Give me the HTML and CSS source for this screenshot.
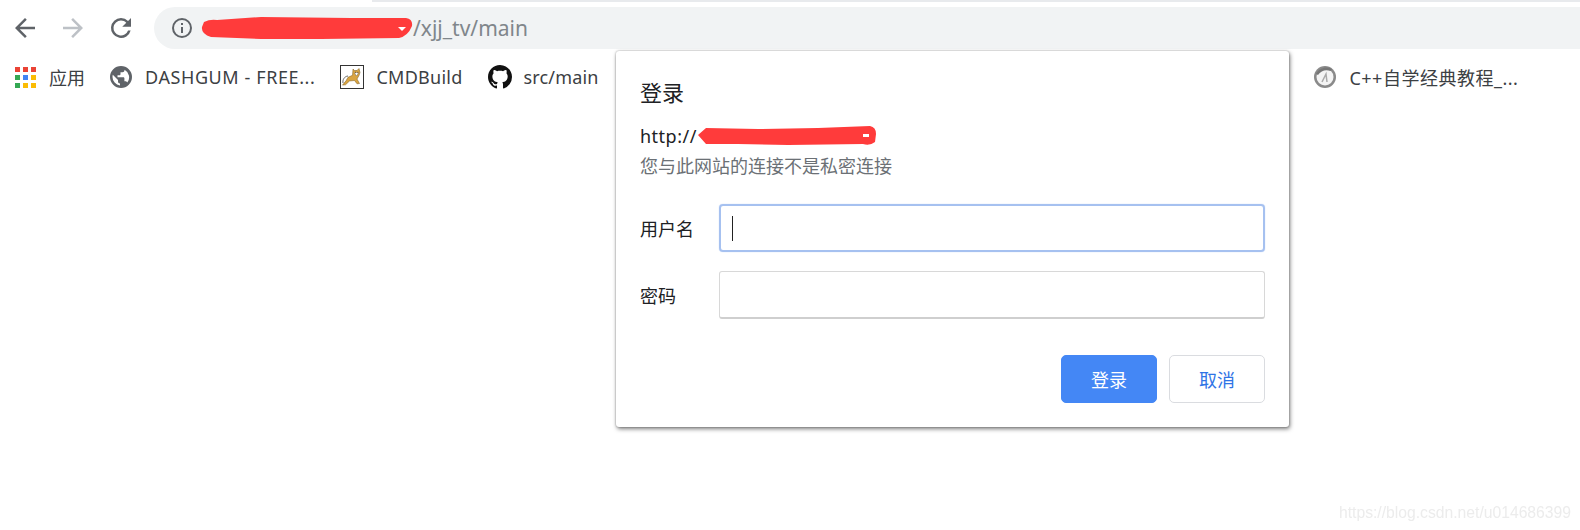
FILE: index.html
```html
<!DOCTYPE html>
<html>
<head>
<meta charset="UTF-8">
<title>xjj_tv</title>
<link rel="stylesheet" href="styles.css">
</head>
<body>
	<div class="tab-edge"></div>

	<div class="toolbar">
		<svg class="nav-icon" viewBox="0 0 24 24"><path fill="#5f6368" d="M20 11H7.830l5.590-5.590L12 4l-8 8 8 8 1.410-1.410L7.830 13H20z"/></svg>
		<svg class="nav-icon" viewBox="0 0 24 24"><path fill="#bdc1c6" d="M4 11h12.170l-5.590-5.590L12 4l8 8-8 8-1.410-1.410L16.170 13H4z"/></svg>
		<svg class="nav-icon" viewBox="0 0 24 24"><path fill="#5f6368" d="M17.650 6.350A7.960 7.960 0 0 0 12 4a8 8 0 1 0 7.730 10h-2.080A6 6 0 1 1 12 6c1.660 0 3.140.690 4.220 1.780L13 11h7V4z"/></svg>
		<div class="omnibox">
			<svg class="info-icon" viewBox="0 0 24 24"><path fill="#5f6368" d="M11 7h2v2h-2zm0 4h2v6h-2zm1-9a10 10 0 1 0 0 20 10 10 0 0 0 0-20zm0 18a8 8 0 1 1 0-16 8 8 0 0 1 0 16z"/></svg>
			<svg class="scribble-url" viewBox="0 0 212 24"><path fill="#ff3b3b" d="M3 6 Q9 3 16 4 L60 1 L150 2 L205 2 Q212 3 211 10 Q207 20 198 22 L120 23 L60 23 L10 21 Q0 18 1 11 Z"/><path fill="#fff" d="M197 11h8l-4 4z"/></svg>
			<span class="url">/xjj_tv/main</span>
		</div>
	</div>

	<div class="bookmarks">
		<div class="mark mark-apps">
			<div class="apps-grid">
				<i class="red"></i><i class="red"></i><i class="red"></i>
				<i class="green"></i><i class="blue"></i><i class="yellow"></i>
				<i class="green"></i><i class="yellow"></i><i class="yellow"></i>
			</div>
			<span>应用</span>
		</div>
		<div class="mark mark-dash">
			<svg class="mark-icon" viewBox="0 0 24 24"><path fill="#5f6368" d="M12 1a11 11 0 1 0 0 22 11 11 0 0 0 0-22zM3.500 12c0-.8.1-1.500.3-2.200L9 15v1.500c0 1 .8 2 2 2v1.900A8.500 8.500 0 0 1 3.500 12zm14.800 5.600c-.3-.8-1-1.400-1.900-1.400h-1v-3c0-.5-.5-1-1-1H8.500v-2h2c.5 0 1-.5 1-1v-2h2c1.100 0 2-.9 2-2v-.4a8.500 8.500 0 0 1 2.800 12.800z"/></svg>
			<span>DASHGUM - FREE...</span>
		</div>
		<div class="mark mark-cmd">
			<svg class="mark-icon tomcat" viewBox="0 0 24 24">
				<rect x=".5" y=".5" width="23" height="23" fill="#fff" stroke="#333"/>
				<path fill="#d9a441" stroke="#7a5a1e" stroke-width=".5" d="M13 4l1.500 1.500L17 5.500 19 3.500l1 4-1 3-2 3.500 2.500 4.500-2.500.3-2.500-3.300-5 .5-4 3.800-3 .3 3.500-4.300 2-3.500 4.500-2z"/>
				<path fill="none" stroke="#666" stroke-width="1" d="M8 11C4 11.500 2.500 15 3 18"/>
				<path fill="#fff" stroke="#555" stroke-width=".4" d="M14.500 8l2-.5 2 .5-2 3z"/>
				<path fill="none" stroke="#333" stroke-width=".8" d="M15 7.300h.8M17.500 7.300h.8"/>
			</svg>
			<span>CMDBuild</span>
		</div>
		<div class="mark mark-git">
			<svg class="mark-icon" viewBox="0 0 16 16"><path fill="#111" d="M8 0C3.580 0 0 3.580 0 8c0 3.540 2.290 6.530 5.470 7.590.4.070.55-.17.55-.38 0-.19-.01-.82-.01-1.490-2.010.37-2.530-.49-2.690-.94-.09-.23-.48-.94-.82-1.130-.28-.15-.68-.52-.01-.53.63-.01 1.080.58 1.230.82.720 1.210 1.870.87 2.330.66.070-.52.280-.87.510-1.070-1.780-.2-3.640-.89-3.640-3.950 0-.87.310-1.590.82-2.150-.08-.2-.36-1.020.08-2.120 0 0 .67-.21 2.200.82.640-.18 1.320-.27 2-.27s1.360.09 2 .27c1.530-1.040 2.200-.82 2.200-.82.440 1.100.16 1.920.08 2.120.51.560.82 1.270.82 2.150 0 3.070-1.870 3.750-3.650 3.950.29.250.54.730.54 1.480 0 1.070-.01 1.930-.01 2.200 0 .21.150.46.550.38A8.010 8.010 0 0 0 16 8c0-4.420-3.580-8-8-8z"/></svg>
			<span>src/main</span>
		</div>
		<div class="mark mark-cpp">
			<svg class="mark-icon" viewBox="0 0 24 24">
				<circle cx="12" cy="12" r="11" fill="#8a8a8a"/>
				<circle cx="12" cy="12" r="8.500" fill="#f4f4f4"/>
				<path fill="#777" d="M3 9c3-6 10-8 16-5l-1.500 2C13 4 8 5.500 5 10z"/>
				<path fill="none" stroke="#aaa" stroke-width="1.500" d="M9 17l4-8 1 8"/>
			</svg>
			<span>C++自学经典教程_...</span>
		</div>
	</div>

	<div class="dialog">
		<h2 class="dialog-title">登录</h2>
		<div class="dialog-origin"><span class="origin-text">http://</span><svg class="scribble-host" viewBox="0 0 178 20"><path fill="#ff3b3b" d="M0 9 L8 2 L60 3 L120 2 L172 0 Q178 1 178 8 L177 16 Q172 20 165 18 L90 19 L40 18 L8 18 Z"/><path fill="#fff" d="M165 8h6v3h-6z"/></svg></div>
		<div class="dialog-note">您与此网站的连接不是私密连接</div>

		<div class="form-row">
			<label class="form-label">用户名</label>
			<div class="field field-focus"><i class="caret"></i></div>
		</div>
		<div class="form-row">
			<label class="form-label">密码</label>
			<div class="field"></div>
		</div>

		<div class="dialog-actions">
			<button class="btn btn-primary">登录</button>
			<button class="btn">取消</button>
		</div>
	</div>

	<div class="watermark">https://blog.csdn.net/u014686399</div>
</body>
</html>
```

FILE: styles.css
```css
body {
	margin: 0;
	width: 1580px;
	height: 530px;
	overflow: hidden;
	background: #fff;
	font-family: "Noto Sans", "Noto Sans CJK SC", sans-serif;
	font-size: 18px;
	color: #222;
}

.tab-edge {
	height: 2px;
	margin-left: 372px;
	background: #e8eaed;
}

/* toolbar */
.toolbar {
	display: flex;
	align-items: center;
	height: 42px;
	margin-top: 5px;
	padding-left: 10px;
}

.nav-icon {
	width: 30px;
	height: 30px;
	margin-right: 18px;
	flex: none;
}

.omnibox {
	display: flex;
	align-items: center;
	flex: 1;
	height: 42px;
	padding-left: 16px;
	background: #f1f3f4;
	border-radius: 21px 0 0 21px;
}

.info-icon {
	width: 24px;
	height: 24px;
	flex: none;
}

.scribble-url {
	width: 216px;
	height: 24px;
	margin-left: 5px;
	margin-right: -2px;
	flex: none;
}

.url {
	font-size: 21px;
	color: #80868b;
}

/* bookmarks */
.bookmarks {
	display: flex;
	align-items: center;
	height: 36px;
	margin-top: 10px;
	padding-left: 15px;
	color: #3c4043;
}

.mark {
	display: flex;
	align-items: center;
	white-space: nowrap;
}

.mark-icon {
	width: 24px;
	height: 24px;
	margin-right: 12px;
	flex: none;
}

.apps-grid {
	display: grid;
	grid-template-columns: repeat(3, 5px);
	grid-auto-rows: 5px;
	gap: 3px;
	margin-right: 13px;
}

.apps-grid i {
	display: block;
}

.red { background: #ea4335; }
.green { background: #34a853; }
.blue { background: #4285f4; }
.yellow { background: #fbbc05; }

.mark-dash { margin-left: 24px; }
.mark-dash span { letter-spacing: .6px; }
.mark-cmd { margin-left: 25px; }
.mark-cmd span { letter-spacing: .25px; }
.mark-git { margin-left: 25px; }
.mark-git span { letter-spacing: .15px; }
.mark-cpp { margin-left: 715px; }
.mark-cpp span { letter-spacing: .5px; }

/* login dialog, sits over the page */
.dialog {
	position: absolute;
	left: 616px;
	top: 51px;
	box-sizing: border-box;
	width: 673px;
	height: 376px;
	padding: 24px;
	background: #fff;
	border-radius: 3px;
	box-shadow: 0 0 2px rgba(0, 0, 0, .35), 1px 2px 4px rgba(0, 0, 0, .5);
}

.dialog-title {
	margin: 0;
	font-size: 22px;
	font-weight: 400;
	line-height: 34px;
	color: #202124;
}

.dialog-origin {
	display: flex;
	align-items: center;
	margin-top: 14px;
	line-height: 26px;
	color: #202124;
}

.origin-text {
	letter-spacing: .5px;
}

.scribble-host {
	width: 180px;
	height: 20px;
}

.dialog-note {
	line-height: 26px;
	margin-top: 4px;
	color: #6b7075;
}

.form-row {
	display: flex;
	align-items: center;
	margin-top: 25px;
}

.form-row + .form-row {
	margin-top: 19px;
}

.form-label {
	width: 79px;
	color: #202124;
	flex: none;
}

.field {
	flex: 1;
	height: 48px;
	box-sizing: border-box;
	border: 1px solid #d8d8d8;
	border-bottom: 2px solid #cfcfcf;
	border-radius: 3px;
}

.field-focus {
	display: flex;
	align-items: center;
	padding-left: 11px;
	border: 2px solid #a6c1f0;
	border-radius: 4px;
	box-shadow: 0 0 1px #a6c1f0;
}

.caret {
	display: block;
	width: 1px;
	height: 25px;
	background: #222;
}

.dialog-actions {
	display: flex;
	justify-content: flex-end;
	gap: 12px;
	margin-top: 36px;
}

.btn {
	width: 96px;
	height: 48px;
	font: inherit;
	color: #2f74e6;
	background: #fff;
	border: 1px solid #dadce0;
	border-radius: 5px;
}

.btn-primary {
	color: #fff;
	background: #4487f5;
	border-color: #4487f5;
}

.watermark {
	position: absolute;
	right: 9px;
	bottom: 8px;
	font-family: "Liberation Sans", sans-serif;
	font-size: 15.700px;
	color: #ececec;
	filter: blur(.4px);
}
```
